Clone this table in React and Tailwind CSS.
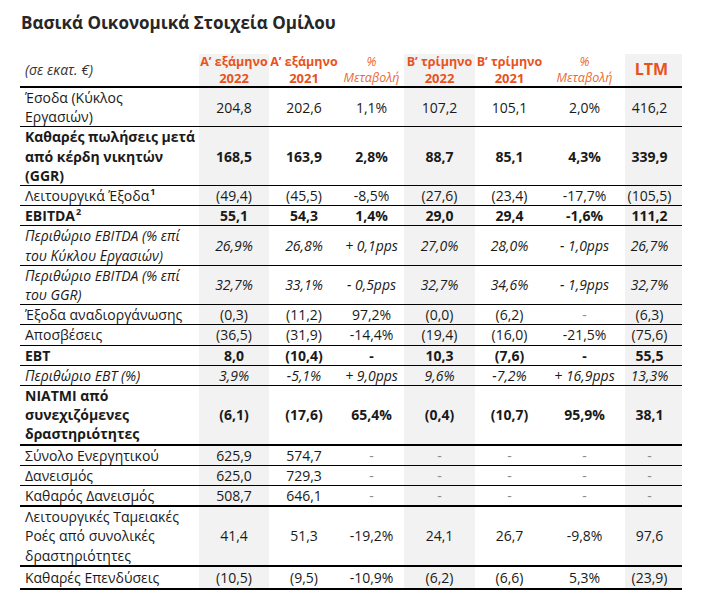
import React from "react";

const COLS = "grid grid-cols-[179px_70px_70px_65px_71px_69px_81px_57px]";

const rows = [
  { l: ["Έσοδα (Κύκλος", "Εργασιών)"], v: ["204,8", "202,6", "1,1%", "107,2", "105,1", "2,0%", "416,2"] },
  { l: ["Καθαρές πωλήσεις μετά", "από κέρδη νικητών", "(GGR)"], v: ["168,5", "163,9", "2,8%", "88,7", "85,1", "4,3%", "339,9"], s: "b" },
  { l: ["Λειτουργικά Έξοδα"], sup: "1", v: ["(49,4)", "(45,5)", "-8,5%", "(27,6)", "(23,4)", "-17,7%", "(105,5)"] },
  { l: ["EBITDA"], sup: "2", v: ["55,1", "54,3", "1,4%", "29,0", "29,4", "-1,6%", "111,2"], s: "b" },
  { l: ["Περιθώριο EBITDA (% επί", "του Κύκλου Εργασιών)"], v: ["26,9%", "26,8%", "+ 0,1pps", "27,0%", "28,0%", "- 1,0pps", "26,7%"], s: "i" },
  { l: ["Περιθώριο EBITDA (% επί", "του GGR)"], v: ["32,7%", "33,1%", "- 0,5pps", "32,7%", "34,6%", "- 1,9pps", "32,7%"], s: "i" },
  { l: ["Έξοδα αναδιοργάνωσης"], v: ["(0,3)", "(11,2)", "97,2%", "(0,0)", "(6,2)", "–", "(6,3)"] },
  { l: ["Αποσβέσεις"], v: ["(36,5)", "(31,9)", "-14,4%", "(19,4)", "(16,0)", "-21,5%", "(75,6)"] },
  { l: ["EBT"], v: ["8,0", "(10,4)", "-", "10,3", "(7,6)", "-", "55,5"], s: "b" },
  { l: ["Περιθώριο EBT (%)"], v: ["3,9%", "-5,1%", "+ 9,0pps", "9,6%", "-7,2%", "+ 16,9pps", "13,3%"], s: "i" },
  { l: ["NIATMI από", "συνεχιζόμενες", "δραστηριότητες"], v: ["(6,1)", "(17,6)", "65,4%", "(0,4)", "(10,7)", "95,9%", "38,1"], s: "b", thick: true },
  { l: ["Σύνολο Ενεργητικού"], v: ["625,9", "574,7", "–", "–", "–", "–", "–"] },
  { l: ["Δανεισμός"], v: ["625,0", "729,3", "–", "–", "–", "–", "–"] },
  { l: ["Καθαρός Δανεισμός"], v: ["508,7", "646,1", "–", "–", "–", "–", "–"], thick: true },
  { l: ["Λειτουργικές Ταμειακές", "Ροές από συνολικές", "δραστηριότητες"], v: ["41,4", "51,3", "-19,2%", "24,1", "26,7", "-9,8%", "97,6"], thick: true },
  { l: ["Καθαρές Επενδύσεις"], v: ["(10,5)", "(9,5)", "-10,9%", "(6,2)", "(6,6)", "5,3%", "(23,9)"], thick: true, last: true },
];

const shaded = [0, 3, 6];

function Row({ r }) {
  const style = r.s === "b" ? "font-bold" : r.s === "i" ? "italic" : "";
  return (
    <div className={`${COLS} ${r.thick ? "border-b-2" : "border-b"} border-black`}>
      <div className={`pl-[5px] ${style} ${r.last ? "py-[1px]" : ""}`}>
        {r.l.map((t, i) => (
          <div key={i} className="whitespace-nowrap">
            {t}
            {r.sup && i === r.l.length - 1 ? (
              <span className="text-[9px] leading-[9px] relative -top-[6px] ml-[1px] font-bold">{r.sup}</span>
            ) : null}
          </div>
        ))}
      </div>
      {r.v.map((v, i) => (
        <div
          key={i}
          className={`flex items-center justify-center whitespace-nowrap ${style} ${
            shaded.includes(i) ? "bg-[#f2f2f2]" : ""
          } ${i === 6 ? "pr-[8px]" : ""} ${v === "–" ? "text-[#8c8c8c] font-normal" : ""}`}
        >
          {v === "–" ? "-" : v}
        </div>
      ))}
    </div>
  );
}

function HeadCell({ a, b, shade }) {
  return (
    <div
      className={`flex flex-col items-center justify-center font-bold text-[#e8531c] text-[12.5px] leading-[16px] ${
        shade ? "bg-[#f2f2f2]" : ""
      }`}
    >
      <div className="whitespace-nowrap">{a}</div>
      <div className="text-[13px]">{b}</div>
    </div>
  );
}

function PctCell() {
  return (
    <div className="flex flex-col items-center justify-center italic text-[#ec6a33] text-[12.5px] leading-[16px]">
      <div>%</div>
      <div>Μεταβολή</div>
    </div>
  );
}

export default function App() {
  return (
    <div
      className="w-[714px] h-[599px] bg-white text-[#1a1a1a] pt-[12px] pl-[20px]"
      style={{ fontFamily: '"Open Sans", "Noto Sans", sans-serif' }}
    >
      <h1 className="text-[17px] font-bold leading-[22px] text-[#262626] pl-[1px]">
        Βασικά Οικονομικά Στοιχεία Ομίλου
      </h1>
      <div className="mt-[20px] w-[662px] text-[14px] leading-[19.2px]">
        <div className={`${COLS} h-[34px] border-b-2 border-black`}>
          <div className="flex items-center pl-[5px] italic text-[#333] text-[14px]">(σε εκατ. €)</div>
          <HeadCell a="Αʹ εξάμηνο" b="2022" shade />
          <HeadCell a="Αʹ εξάμηνο" b="2021" />
          <PctCell />
          <HeadCell a="Βʹ τρίμηνο" b="2022" shade />
          <HeadCell a="Βʹ τρίμηνο" b="2021" />
          <PctCell />
          <div className="flex items-center justify-center bg-[#f2f2f2] font-bold text-[#e8531c] text-[16px] pr-[4px]">
            LTM
          </div>
        </div>
        {rows.map((r, i) => (
          <Row key={i} r={r} />
        ))}
      </div>
    </div>
  );
}
